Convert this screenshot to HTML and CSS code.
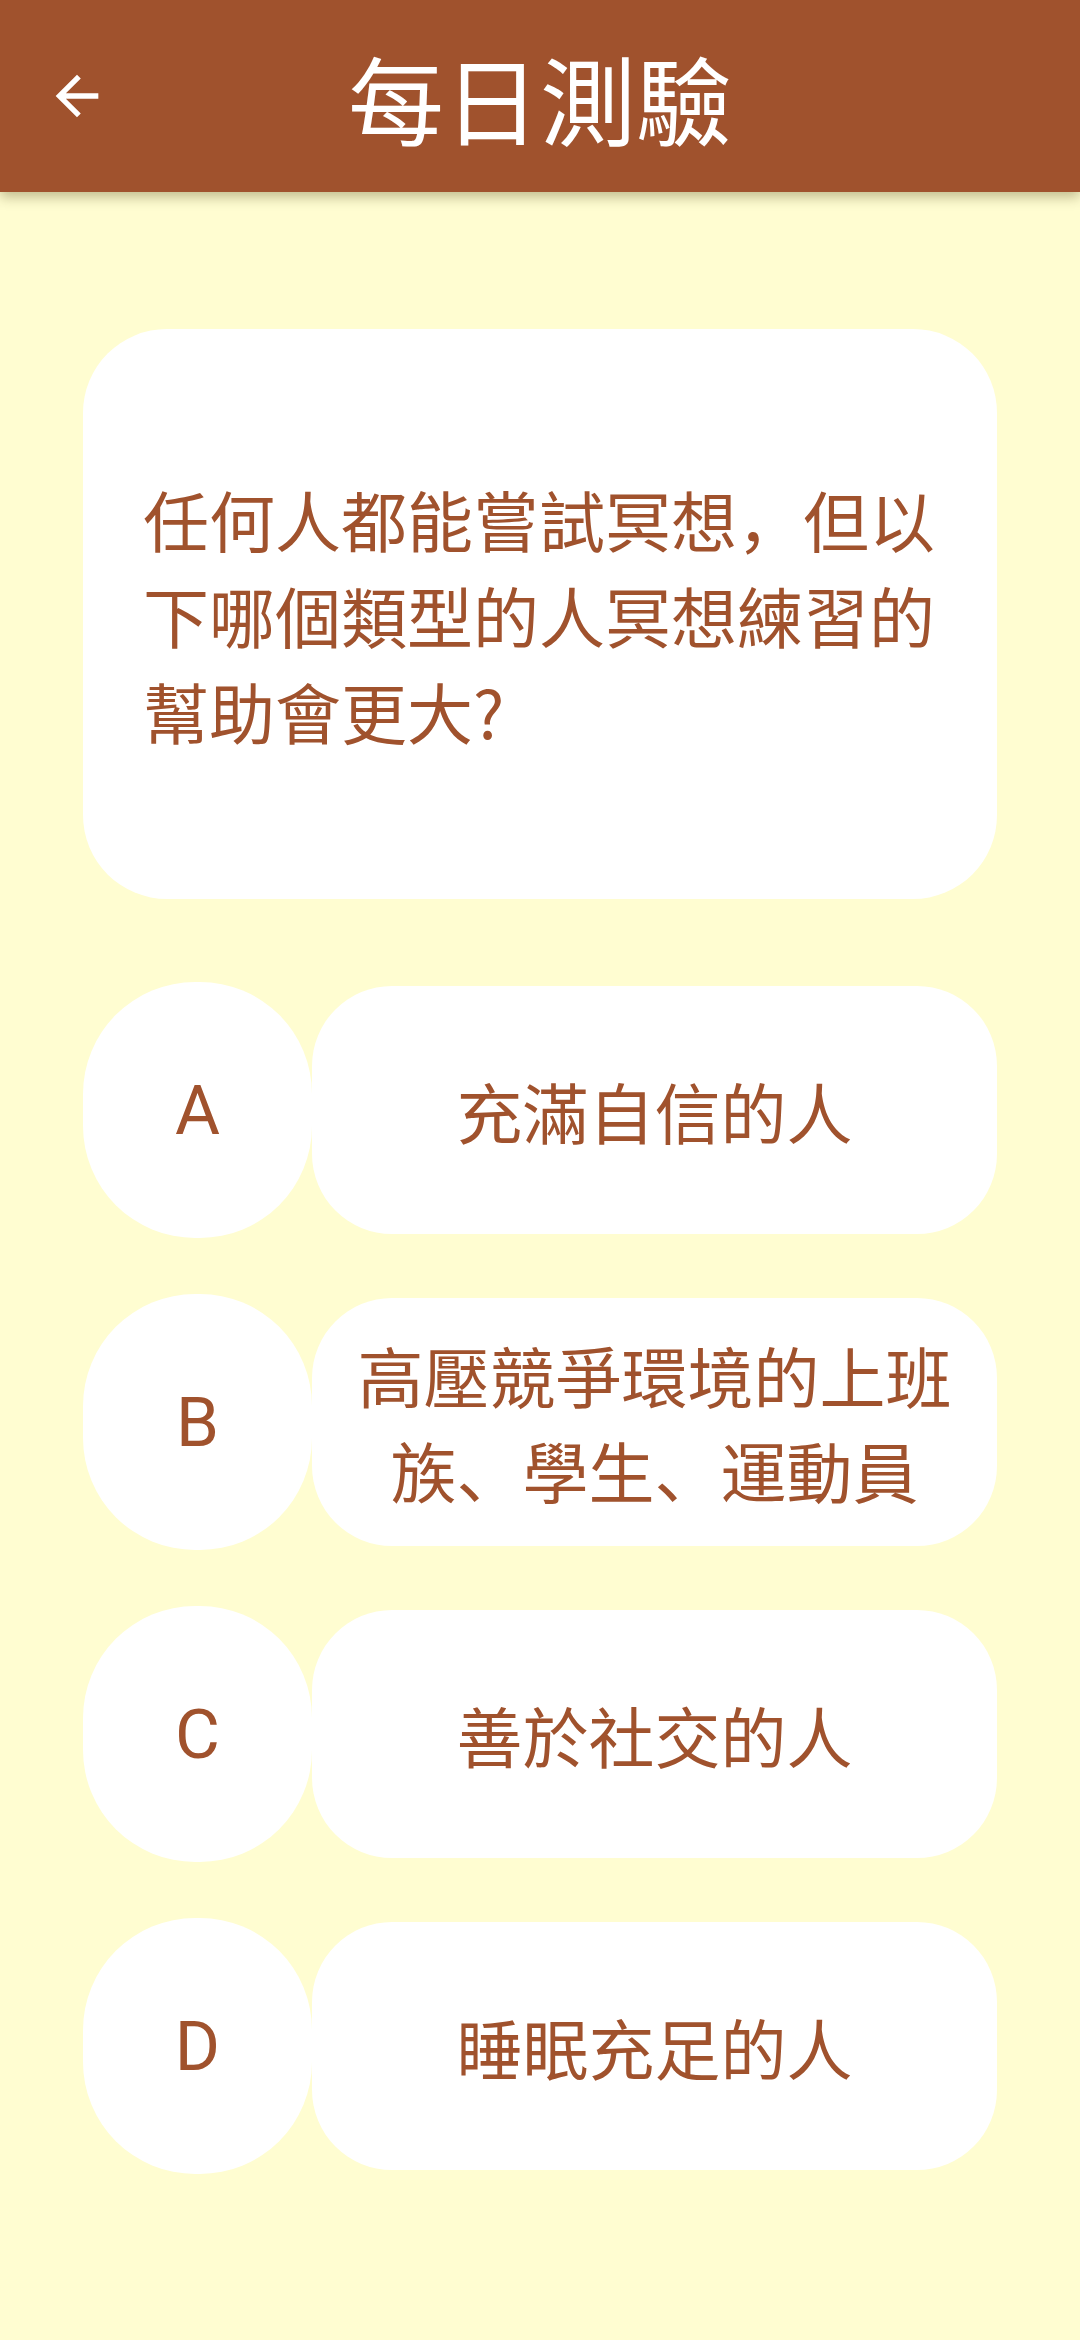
FILE: index.html
```html
<!DOCTYPE html>
<html>
<head>
<meta charset="utf-8">
<title>每日測驗</title>
<link rel="stylesheet" href="styles.css">
</head>
<body>
<header class="appbar">
  <div class="back">
    <svg class="back-icon" viewBox="0 0 24 24" width="64" height="64"><path fill="#ffffff" d="M20 11H7.83l5.59-5.59L12 4l-8 8 8 8 1.41-1.41L7.83 13H20v-2z"/></svg>
  </div>
  <h1 class="title">每日測驗</h1>
  <div class="spacer"></div>
</header>
<main class="content">
  <section class="question-card">
    <p class="question">任何人都能嘗試冥想，但以下哪個類型的人冥想練習的幫助會更大?</p>
  </section>
  <ul class="options">
    <li class="option"><div class="letter">A</div><div class="answer">充滿自信的人</div></li>
    <li class="option"><div class="letter">B</div><div class="answer">高壓競爭環境的上班族、學生、運動員</div></li>
    <li class="option"><div class="letter">C</div><div class="answer">善於社交的人</div></li>
    <li class="option"><div class="letter">D</div><div class="answer">睡眠充足的人</div></li>
  </ul>
</main>
</body>
</html>
```
FILE: styles.css
```css
html, body {
  margin: 0;
  padding: 0;
}
body {
  background: #FFFDD1;
  font-family: "Noto Sans CJK SC", Roboto, sans-serif;
  color: #A0522D;
  width: 1080px;
  min-height: 2340px;
}
.appbar {
  position: relative;
  z-index: 2;
  height: 192px;
  background: #A0522D;
  display: grid;
  grid-template-columns: 1fr auto 1fr;
  align-items: center;
  box-shadow: 0 5px 12px rgba(60, 50, 0, 0.32);
}
.back {
  display: flex;
  align-items: center;
  padding-left: 45px;
}
.back-icon {
  display: block;
}
.title {
  margin: 0;
  font-size: 96px;
  font-weight: 400;
  color: #ffffff;
  line-height: normal;
  white-space: nowrap;
}
.content {
  width: 914px;
  margin: 0 auto;
  padding-top: 137px;
}
.question-card {
  height: 570px;
  background: #ffffff;
  border-radius: 84px;
  box-sizing: border-box;
  padding: 0 60px;
  display: flex;
  align-items: center;
}
.question {
  margin: 0;
  font-size: 66px;
  line-height: 96px;
}
.options {
  list-style: none;
  margin: 83px 0 0;
  padding: 0;
  display: flex;
  flex-direction: column;
  gap: 56px;
}
.option {
  display: flex;
  align-items: center;
  height: 256px;
}
.letter {
  width: 229px;
  height: 256px;
  flex: none;
  background: #ffffff;
  border-radius: 112px;
  display: flex;
  align-items: center;
  justify-content: center;
  font-family: Roboto, sans-serif;
  font-size: 69px;
}
.answer {
  flex: 1;
  height: 248px;
  background: #ffffff;
  border-radius: 80px;
  box-sizing: border-box;
  padding: 0 30px;
  display: flex;
  align-items: center;
  justify-content: center;
  text-align: center;
  font-size: 66px;
  line-height: 95px;
}
```
